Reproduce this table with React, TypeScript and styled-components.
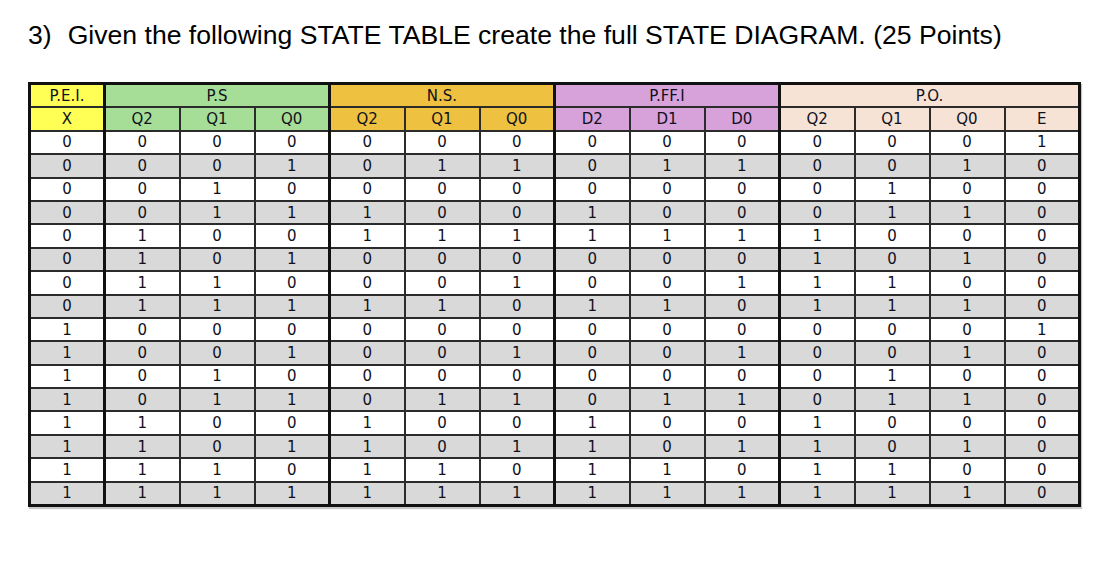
import React from "react";
import styled, { createGlobalStyle } from "styled-components";

const Global = createGlobalStyle`
  html, body { margin: 0; padding: 0; background: #ffffff; }
  body { width: 1116px; height: 581px; overflow: hidden; }
`;

const Page = styled.div`
  padding: 22px 0 0 28px;
  display: flex;
  flex-direction: column;
  gap: 34px;
`;

const Title = styled.h1`
  margin: 0;
  font-family: "Liberation Sans", Arial, sans-serif;
  font-weight: 400;
  font-size: 26.6px;
  line-height: 26px;
  color: #000;
  white-space: nowrap;
`;

const Num = styled.span`
  margin-right: 16px;
`;

const Table = styled.table`
  border-collapse: collapse;
  table-layout: fixed;
  width: 1053px;
  box-shadow: 1px 2px 1px rgba(0, 0, 0, 0.22);
  border: 3px solid #111;
`;

type Tone = "yellow" | "green" | "gold" | "violet" | "peach";

const tones: Record<Tone, string> = {
  yellow: "#ffff55",
  green: "#a6de98",
  gold: "#efc141",
  violet: "#d7a2da",
  peach: "#f6e3d6",
};

const HeadCell = styled.th<{ $tone: Tone; $groupEnd?: boolean }>`
  background: ${(p) => tones[p.$tone]};
  font-family: "DejaVu Sans", sans-serif;
  font-size: 15px;
  font-weight: 400;
  color: #10101c;
  height: 21.4px;
  line-height: 20px;
  padding: 0;
  text-align: center;
  border: 2px solid #2b2b2b;
  border-right: ${(p) => (p.$groupEnd ? "3px solid #111" : "2px solid #2b2b2b")};
`;

const Row = styled.tr<{ $shade: boolean }>`
  background: ${(p) => (p.$shade ? "#d9d9d9" : "#ffffff")};
`;

const Cell = styled.td<{ $groupEnd?: boolean }>`
  font-family: "DejaVu Sans", sans-serif;
  font-size: 15px;
  color: #10101c;
  height: 21.4px;
  line-height: 20px;
  padding: 0;
  text-align: center;
  border: 2px solid #2b2b2b;
  border-right: ${(p) => (p.$groupEnd ? "3px solid #111" : "2px solid #2b2b2b")};
`;

const rows: number[][] = [];
for (let x = 0; x < 2; x++) {
  for (let s = 0; s < 8; s++) {
    rows.push([x, (s >> 2) & 1, (s >> 1) & 1, s & 1]);
  }
}

const nextState: number[][] = [
  [0, 0, 0], [0, 1, 1], [0, 0, 0], [1, 0, 0],
  [1, 1, 1], [0, 0, 0], [0, 0, 1], [1, 1, 0],
  [0, 0, 0], [0, 0, 1], [0, 0, 0], [0, 1, 1],
  [1, 0, 0], [1, 0, 1], [1, 1, 0], [1, 1, 1],
];

const groupEnds = new Set([0, 3, 6, 9]);

const subHeads: { label: string; tone: Tone }[] = [
  { label: "X", tone: "yellow" },
  { label: "Q2", tone: "green" },
  { label: "Q1", tone: "green" },
  { label: "Q0", tone: "green" },
  { label: "Q2", tone: "gold" },
  { label: "Q1", tone: "gold" },
  { label: "Q0", tone: "gold" },
  { label: "D2", tone: "violet" },
  { label: "D1", tone: "violet" },
  { label: "D0", tone: "violet" },
  { label: "Q2", tone: "peach" },
  { label: "Q1", tone: "peach" },
  { label: "Q0", tone: "peach" },
  { label: "E", tone: "peach" },
];

export default function App() {
  const data = rows.map((r, i) => {
    const ns = nextState[i];
    const e = r[1] === 0 && r[2] === 0 && r[3] === 0 ? 1 : 0;
    return [r[0], r[1], r[2], r[3], ...ns, ...ns, r[1], r[2], r[3], e];
  });

  return (
    <>
      <Global />
      <Page>
        <Title>
          <Num>3)</Num>Given the following STATE TABLE create the full STATE DIAGRAM. (25 Points)
        </Title>
        <Table>
          <thead>
            <tr>
              <HeadCell $tone="yellow" $groupEnd>P.E.I.</HeadCell>
              <HeadCell $tone="green" colSpan={3} $groupEnd>P.S</HeadCell>
              <HeadCell $tone="gold" colSpan={3} $groupEnd>N.S.</HeadCell>
              <HeadCell $tone="violet" colSpan={3} $groupEnd>P.FF.I</HeadCell>
              <HeadCell $tone="peach" colSpan={4}>P.O.</HeadCell>
            </tr>
            <tr>
              {subHeads.map((h, i) => (
                <HeadCell key={i} $tone={h.tone} $groupEnd={groupEnds.has(i)}>
                  {h.label}
                </HeadCell>
              ))}
            </tr>
          </thead>
          <tbody>
            {data.map((r, i) => (
              <Row key={i} $shade={i % 2 === 1}>
                {r.map((v, j) => (
                  <Cell key={j} $groupEnd={groupEnds.has(j)}>
                    {v}
                  </Cell>
                ))}
              </Row>
            ))}
          </tbody>
        </Table>
      </Page>
    </>
  );
}
